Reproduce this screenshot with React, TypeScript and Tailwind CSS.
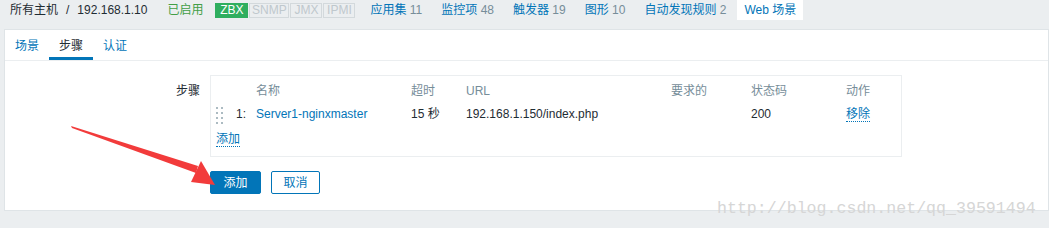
import React from "react";

const font = { fontFamily: '"Liberation Sans", Arial, "Noto Sans CJK SC", sans-serif' };

function NavLink({ label, count }: { label: string; count?: number }) {
  return (
    <span className="text-[#0275b8]">
      {label}
      {count !== undefined && <span className="text-[#768d99]"> {count}</span>}
    </span>
  );
}

function DragHandle() {
  return (
    <div className="grid grid-cols-2 gap-x-[3px] gap-y-[3px] w-[7px]">
      {Array.from({ length: 8 }).map((_, i) => (
        <span key={i} className="w-[2px] h-[2px] bg-[#acbbc2]" />
      ))}
    </div>
  );
}

const cols = "grid grid-cols-[20px_20px_155px_55px_205px_80px_95px_1fr]";

export default function App() {
  return (
    <div
      style={font}
      className="relative w-[1049px] h-[228px] overflow-hidden bg-[#ebeef0] text-[12px] text-[#1f2c33]"
    >
      {/* host nav */}
      <div className="flex items-center h-[20px] pl-[10px]">
        <span className="text-[#1f2c33]">所有主机</span>
        <span className="mx-[8px] text-[#1f2c33]">/</span>
        <span className="text-[#1f2c33]">192.168.1.10</span>
        <span className="ml-[20px] text-[#429e47]">已启用</span>
        <div className="flex ml-[12px] gap-[1px] text-[12px]">
          <span className="w-[33px] h-[15px] flex items-center justify-center bg-[#2fae5f] text-white">ZBX</span>
          <span className="w-[40px] h-[15px] flex items-center justify-center text-[#bfc8cd] border border-[#d3d9dc]">SNMP</span>
          <span className="w-[32px] h-[15px] flex items-center justify-center text-[#bfc8cd] border border-[#d3d9dc]">JMX</span>
          <span className="w-[32px] h-[15px] flex items-center justify-center text-[#bfc8cd] border border-[#d3d9dc]">IPMI</span>
        </div>
        <div className="flex items-center gap-[19px] ml-[15px]">
          <NavLink label="应用集" count={11} />
          <NavLink label="监控项" count={48} />
          <NavLink label="触发器" count={19} />
          <NavLink label="图形" count={10} />
          <NavLink label="自动发现规则" count={2} />
        </div>
        <span className="ml-[11px] h-[20px] px-[7px] flex items-center bg-white text-[#0275b8]">Web 场景</span>
      </div>

      {/* panel */}
      <div className="mt-[9px] ml-[4px] h-[182px] bg-white border border-[#dfe4e7]">
        <div className="flex h-[31px] border-b border-[#ebeef0]">
          <span className="px-[10px] pt-[7px] text-[#0275b8]">场景</span>
          <span className="px-[10px] pt-[7px] border-b-[3px] border-[#0275b8] text-[#1f2c33]">步骤</span>
          <span className="px-[10px] pt-[7px] text-[#0275b8]">认证</span>
        </div>

        <div className="flex pt-[14px]">
          <div className="w-[195px] text-right pt-[7px]">步骤</div>
          <div className="ml-[10px]">
            <div className="w-[692px] h-[82px] border border-[#ebeef0] pl-[5px] pt-[6px]">
              <div className={`${cols} text-[#768d99] h-[16px] items-center`}>
                <span />
                <span />
                <span>名称</span>
                <span>超时</span>
                <span>URL</span>
                <span>要求的</span>
                <span>状态码</span>
                <span>动作</span>
              </div>
              <div className={`${cols} mt-[6px] h-[18px] items-start`}>
                <div className="pt-[3px]">
                  <DragHandle />
                </div>
                <span className="pt-[1px]">1:</span>
                <span className="pt-[1px] text-[#0275b8]">Server1-nginxmaster</span>
                <span className="pt-[1px]">15 秒</span>
                <span className="pt-[1px]">192.168.1.150/index.php</span>
                <span />
                <span className="pt-[1px]">200</span>
                <span className="pt-[1px]">
                  <span className="text-[#0275b8] border-b border-dotted border-[#0275b8]">移除</span>
                </span>
              </div>
              <div className="mt-[8px]">
                <span className="text-[#0275b8] border-b border-dotted border-[#0275b8]">添加</span>
              </div>
            </div>
            <div className="flex gap-[10px] mt-[14px]">
              <button className="w-[51px] h-[23px] bg-[#0275b8] border border-[#0275b8] text-white rounded-[2px]">添加</button>
              <button className="w-[49px] h-[23px] bg-white border border-[#0275b8] text-[#0275b8] rounded-[2px]">取消</button>
            </div>
          </div>
        </div>
      </div>

      {/* annotation arrow */}
      <svg className="absolute left-0 top-0 pointer-events-none" width="1049" height="228">
        <polygon points="71,126 72,128 196,173 198,166" fill="#f23b3b" />
        <polygon points="201,161 215,185 191,182" fill="#f23b3b" />
      </svg>

      {/* watermark */}
      <span
        className="absolute left-[717px] top-[197px] text-[16.6px] text-[#d6d6d6] pointer-events-none"
        style={{ fontFamily: '"Liberation Mono", "DejaVu Sans Mono", monospace' }}
      >
        http://blog.csdn.net/qq_39591494
      </span>
    </div>
  );
}
